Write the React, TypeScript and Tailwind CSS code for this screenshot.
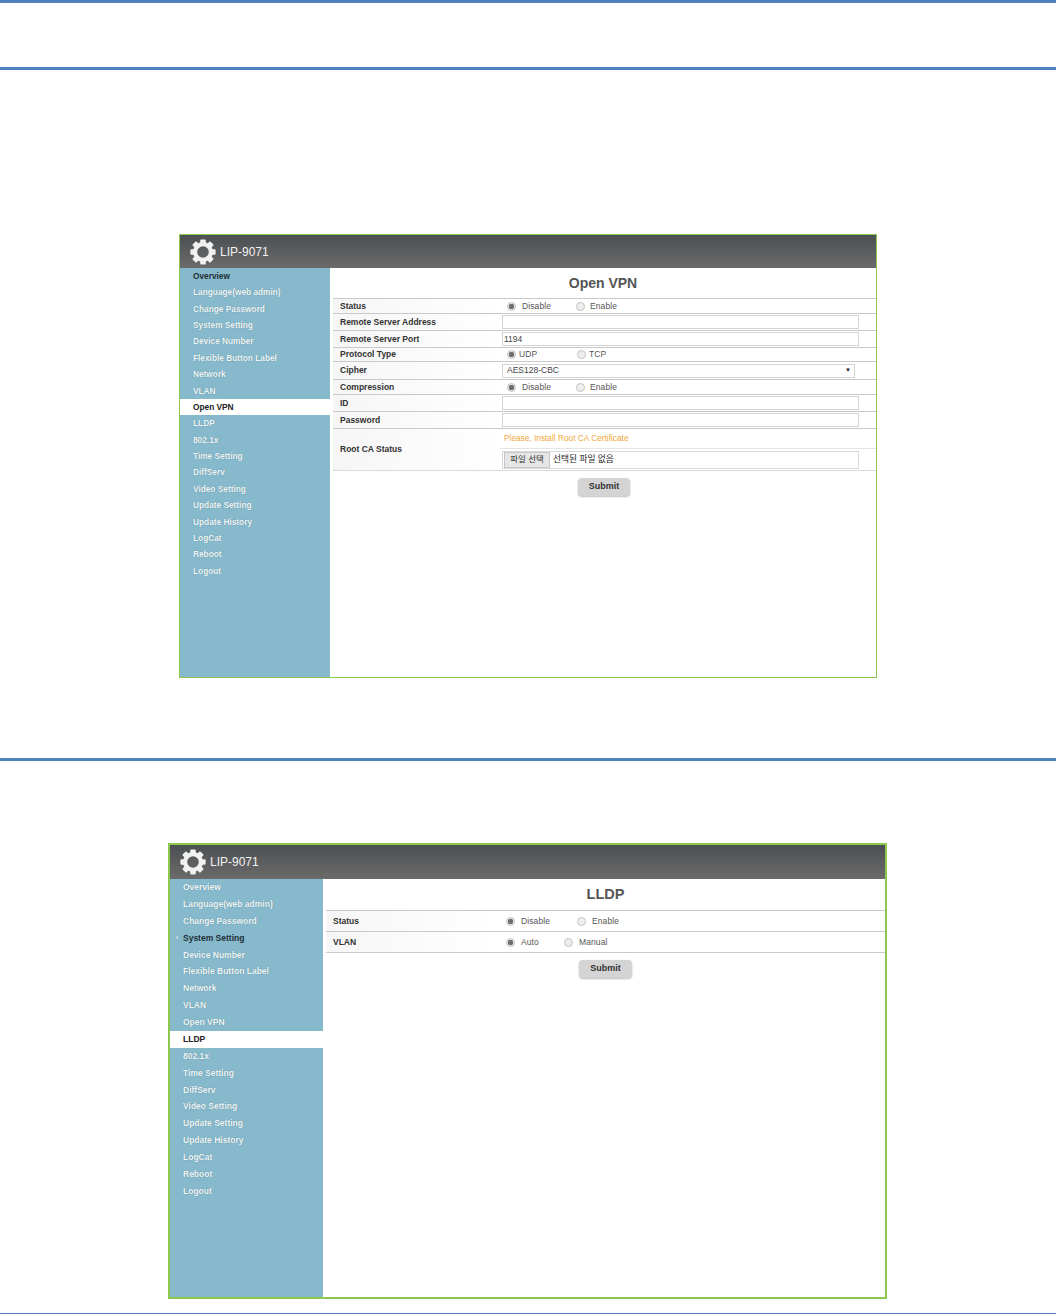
import type { ReactNode } from "react";

const menu = [
  "Overview",
  "Language(web admin)",
  "Change Password",
  "System Setting",
  "Device Number",
  "Flexible Button Label",
  "Network",
  "VLAN",
  "Open VPN",
  "LLDP",
  "802.1x",
  "Time Setting",
  "DiffServ",
  "Video Setting",
  "Update Setting",
  "Update History",
  "LogCat",
  "Reboot",
  "Logout",
];

function Gear() {
  const teeth = [0, 45, 90, 135, 180, 225, 270, 315];
  return (
    <svg width="26" height="26" viewBox="0 0 26 26" className="shrink-0">
      {teeth.map((deg) => (
        <rect key={deg} x="10.2" y="0.4" width="5.6" height="6" rx="1" fill="#f1f1f1" transform={`rotate(${deg} 13 13)`} />
      ))}
      <circle cx="13" cy="13" r="7.9" fill="none" stroke="#f1f1f1" strokeWidth="4.2" />
    </svg>
  );
}

function Radio({ name, checked }: { name: string; checked?: boolean }) {
  return (
    <input
      type="radio"
      name={name}
      defaultChecked={checked}
      className="m-0 h-[9px] w-[9px] shrink-0 appearance-none rounded-full border border-[#c4c4c4] bg-[#eeeeee] checked:bg-[radial-gradient(circle,#6f6f6f_0_2.5px,#e6e6e6_3px)]"
    />
  );
}

function Option({ name, label, checked, className }: { name: string; label: string; checked?: boolean; className: string }) {
  return (
    <label className={`flex items-center text-[8.5px] text-[#555] tracking-[0.1px] ${className}`}>
      <Radio name={name} checked={checked} />
      <span>{label}</span>
    </label>
  );
}

function Header({ className }: { className: string }) {
  return (
    <div className={`flex items-center bg-gradient-to-b from-[#4b5052] to-[#6c6a6b] ${className}`}>
      <Gear />
      <span className="ml-[4px] text-[12px] text-[#f2f2f2]">LIP-9071</span>
    </div>
  );
}

function Sidebar({ active, dark, itemClass, className }: { active: string; dark: string; itemClass: string; className: string }) {
  return (
    <nav className={`shrink-0 bg-[#86b9cc] ${className}`}>
      {menu.map((item) => (
        <div
          key={item}
          className={`relative flex items-center pl-[13px] font-bold ${itemClass} ${
            item === active
              ? "bg-white text-[#222]"
              : item === dark
                ? "text-[#1f2f36]"
                : "text-[#eef6f9] [text-shadow:0_0_1px_#5b7f8c]"
          }`}
        >
          {item === dark && dark === "System Setting" && (
            <span className="absolute left-[6px] text-[7px] font-normal text-white">›</span>
          )}
          {item}
        </div>
      ))}
    </nav>
  );
}

function Row({ label, className, children }: { label: string; className: string; children: ReactNode }) {
  return (
    <div className={`flex items-center border-b border-[#c9c9c9] ${className}`}>
      <div className="flex h-full w-[167px] shrink-0 items-center bg-gradient-to-r from-[#f6f6f6] to-white pl-[7px] text-[8.5px] font-bold text-[#333]">
        {label}
      </div>
      {children}
    </div>
  );
}

function Field({ value }: { value?: string }) {
  return (
    <input
      type="text"
      defaultValue={value}
      className="ml-[2px] h-[14px] w-[357px] border border-[#d4d4d4] bg-white px-[1px] text-[8.5px] text-[#444] outline-none"
    />
  );
}

function Submit({ className }: { className: string }) {
  return (
    <button
      type="button"
      className={`block rounded-[4px] bg-[#d4d4d4] text-[9px] font-bold text-[#333] shadow-[0_1px_2px_#bbbbbb] ${className}`}
    >
      Submit
    </button>
  );
}

function OpenVpn() {
  return (
    <div className="ml-[179px] mt-[164px] flex h-[444px] w-[698px] flex-col border border-[#8cc84b] font-['Liberation_Sans',sans-serif]">
      <Header className="h-[33px] shrink-0 pl-[10px]" />
      <div className="flex min-h-0 flex-1">
        <Sidebar active="Open VPN" dark="Overview" itemClass="h-[16.39px] text-[8.3px]" className="w-[150px]" />
        <main className="min-w-0 flex-1 bg-white pl-[3px]">
          <h1 className="flex h-[30px] items-center justify-center pr-[3px] text-[14px] font-bold text-[#555]">Open VPN</h1>
          <div className="border-t border-[#c9c9c9]">
            <Row label="Status" className="h-[15px]">
              <div className="flex items-center pl-[7px]">
                <Option name="vpn-status" label="Disable" checked className="w-[69px] gap-[6px]" />
                <Option name="vpn-status" label="Enable" className="gap-[5px]" />
              </div>
            </Row>
            <Row label="Remote Server Address" className="h-[17px]">
              <Field />
            </Row>
            <Row label="Remote Server Port" className="h-[17px]">
              <Field value="1194" />
            </Row>
            <Row label="Protocol Type" className="h-[14px]">
              <div className="flex items-center pl-[7px]">
                <Option name="vpn-proto" label="UDP" checked className="w-[70px] gap-[3px]" />
                <Option name="vpn-proto" label="TCP" className="gap-[3px]" />
              </div>
            </Row>
            <Row label="Cipher" className="h-[18px]">
              <div className="ml-[2px] flex h-[14px] w-[353px] items-center justify-between border border-[#d4d4d4] pl-[4px] pr-[3px] text-[8.5px] text-[#444]">
                <span>AES128-CBC</span>
                <span className="text-[6px] text-[#222]">▼</span>
              </div>
            </Row>
            <Row label="Compression" className="h-[15px]">
              <div className="flex items-center pl-[7px]">
                <Option name="vpn-comp" label="Disable" checked className="w-[69px] gap-[6px]" />
                <Option name="vpn-comp" label="Enable" className="gap-[5px]" />
              </div>
            </Row>
            <Row label="ID" className="h-[17px]">
              <Field />
            </Row>
            <Row label="Password" className="h-[17px]">
              <Field />
            </Row>
            <div className="flex h-[42px] border-b border-[#d9d9d9]">
              <div className="flex w-[167px] shrink-0 items-center bg-gradient-to-r from-[#f6f6f6] to-white pl-[7px] text-[8.5px] font-bold text-[#333]">
                Root CA Status
              </div>
              <div className="flex flex-1 flex-col">
                <div className="flex h-[20px] items-center border-b border-[#e4e4e4] pl-[4px] text-[8.3px] text-[#f0a83c]">
                  Please, Install Root CA Certificate
                </div>
                <div className="flex flex-1 items-center">
                  <div className="ml-[2px] flex h-[18px] w-[357px] items-center border border-[#d9d9d9] pl-[1px] font-['Liberation_Sans','Noto_Sans_CJK_KR',sans-serif] text-[8.7px] text-[#222]">
                    <button type="button" className="h-[16px] w-[46px] border border-[#c8c8c8] bg-[#e6e6e6] text-[8.5px] text-[#333]">
                      파일 선택
                    </button>
                    <span className="ml-[3px]">선택된 파일 없음</span>
                  </div>
                </div>
              </div>
            </div>
          </div>
          <Submit className="ml-[245px] mt-[7px] h-[18px] w-[52px]" />
        </main>
      </div>
    </div>
  );
}

function Lldp() {
  return (
    <div className="ml-[168px] mt-[82px] flex h-[456px] w-[719px] flex-col border-2 border-[#8cc84b] font-['Liberation_Sans',sans-serif]">
      <Header className="h-[34px] shrink-0 pl-[10px]" />
      <div className="flex min-h-0 flex-1">
        <Sidebar active="LLDP" dark="System Setting" itemClass="h-[16.89px] text-[8.5px]" className="w-[153px]" />
        <main className="min-w-0 flex-1 bg-white pl-[3px]">
          <h1 className="flex h-[31px] items-center justify-center text-[14.5px] font-bold text-[#555]">LLDP</h1>
          <div className="border-t border-[#c9c9c9]">
            <Row label="Status" className="h-[21px]">
              <div className="flex items-center pl-[13px]">
                <Option name="lldp-status" label="Disable" checked className="w-[71px] gap-[6px]" />
                <Option name="lldp-status" label="Enable" className="gap-[6px]" />
              </div>
            </Row>
            <Row label="VLAN" className="h-[21px]">
              <div className="flex items-center pl-[13px]">
                <Option name="lldp-vlan" label="Auto" checked className="w-[58px] gap-[6px]" />
                <Option name="lldp-vlan" label="Manual" className="gap-[6px]" />
              </div>
            </Row>
          </div>
          <Submit className="ml-[253px] mt-[7px] h-[18px] w-[53px]" />
        </main>
      </div>
    </div>
  );
}

export default function App() {
  return (
    <div className="h-[1314px] w-[1056px] overflow-hidden bg-white">
      <div className="h-[3px] bg-[#4f81bd]" />
      <div className="mt-[64px] h-[3px] bg-[#4f81bd]" />
      <OpenVpn />
      <div className="mt-[80px] h-[3px] bg-[#4f81bd]" />
      <Lldp />
      <div className="mt-[14px] h-[1px] bg-[#4f81bd]" />
    </div>
  );
}
